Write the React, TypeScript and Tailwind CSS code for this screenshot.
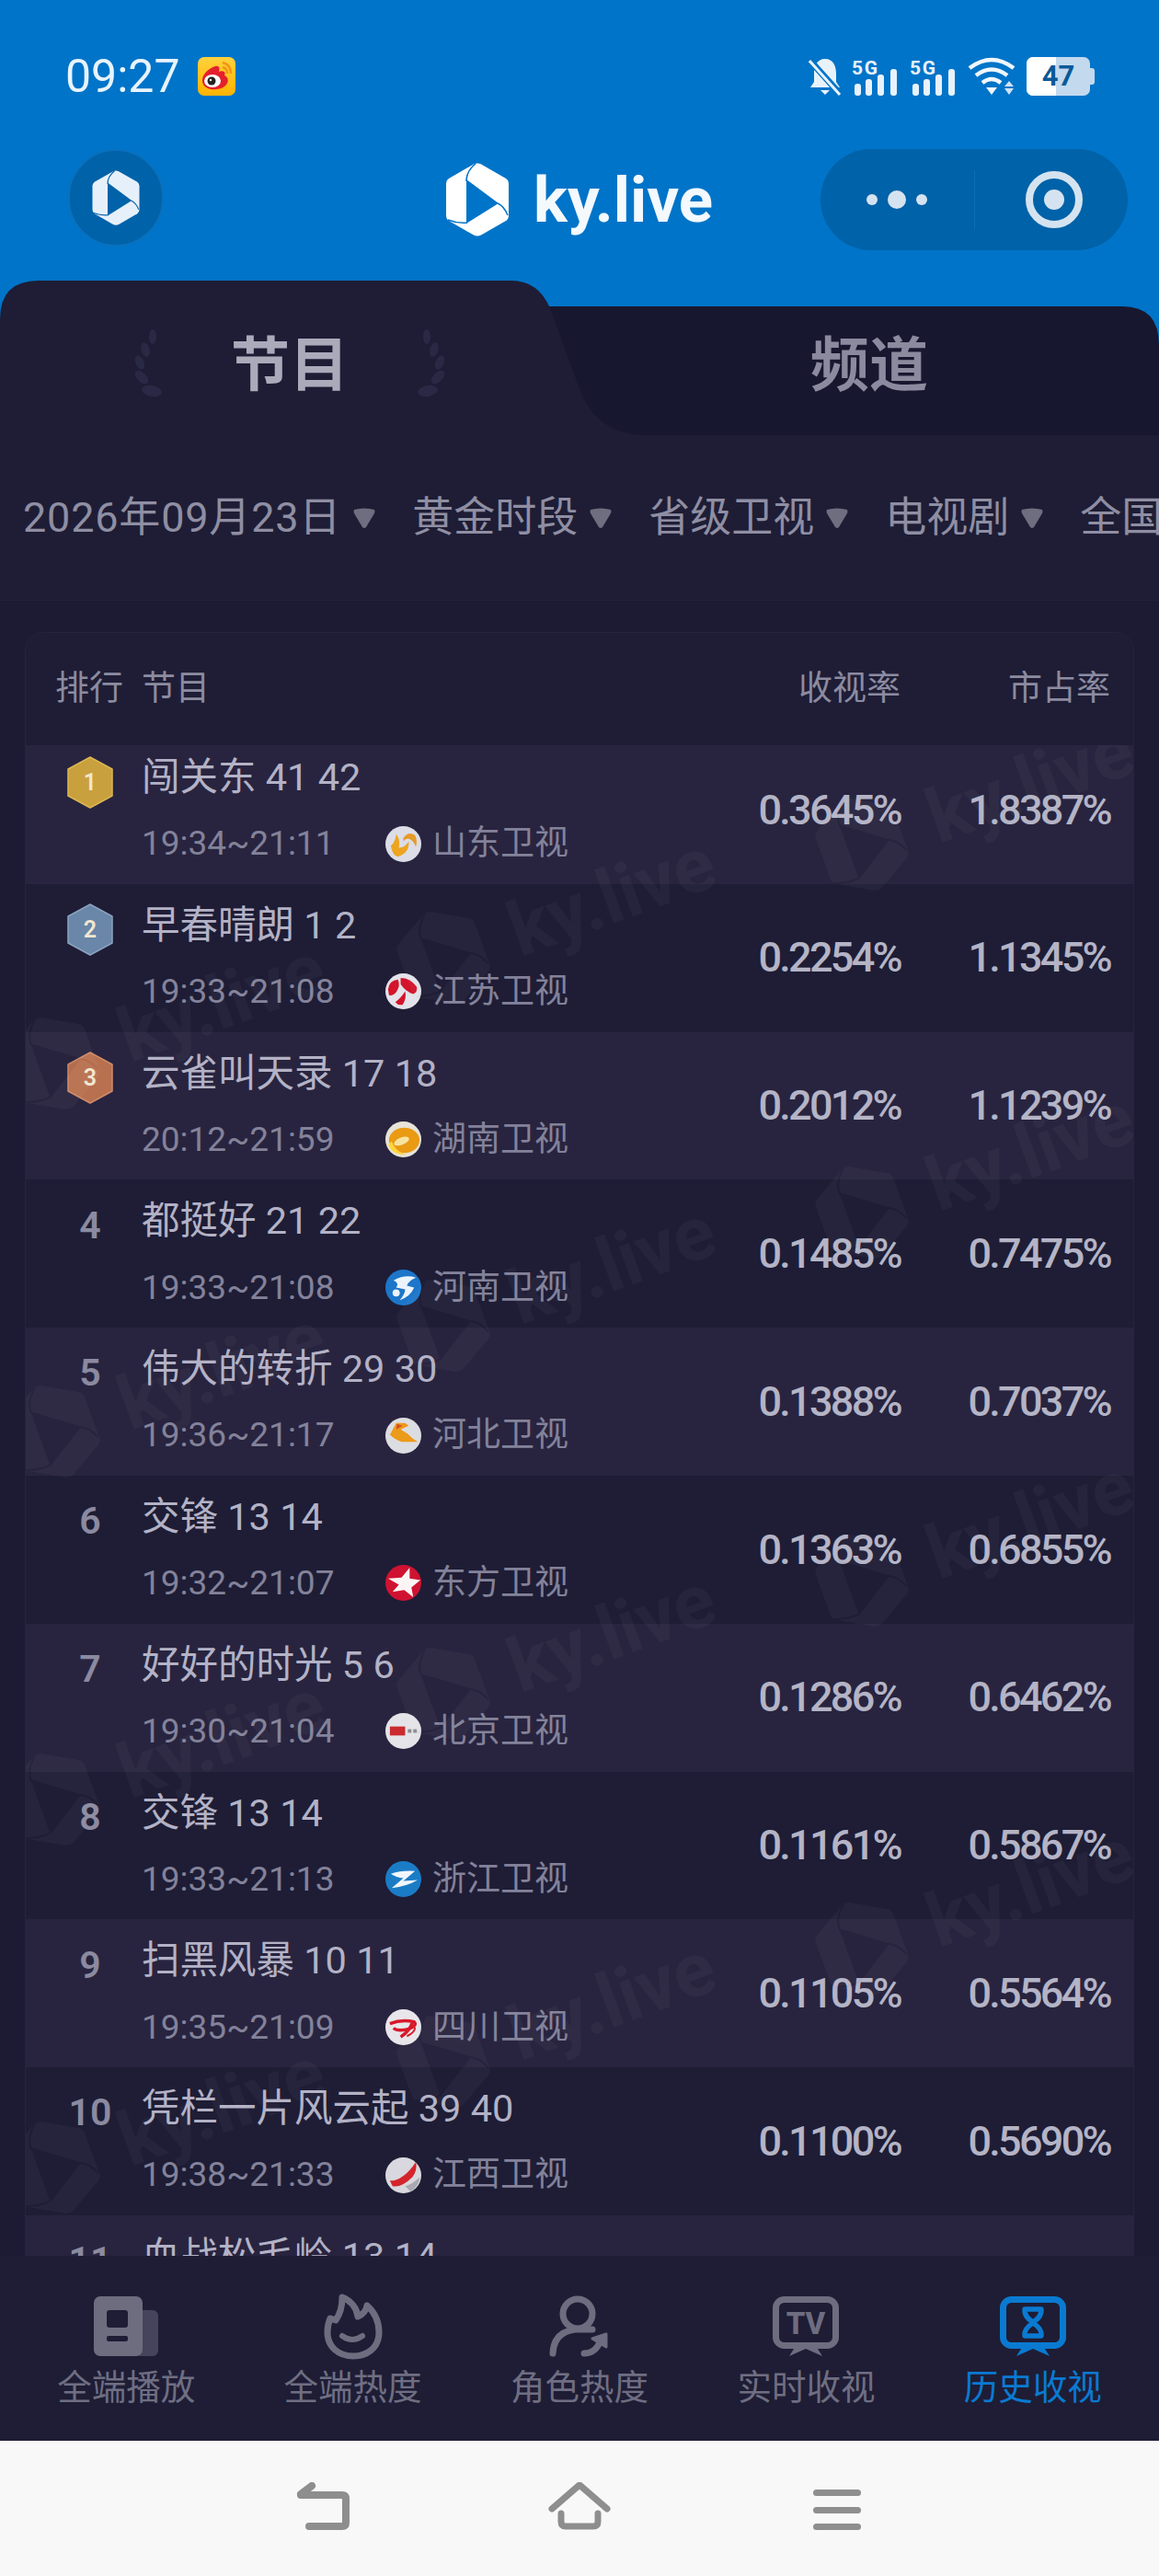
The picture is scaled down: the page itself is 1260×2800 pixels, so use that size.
const rows = [
  { name: "闯关东 41 42", time: "19:34~21:11", channel: "山东卫视", logo: "shandong", rate: "0.3645%", share: "1.8387%" },
  { name: "早春晴朗 1 2", time: "19:33~21:08", channel: "江苏卫视", logo: "jiangsu", rate: "0.2254%", share: "1.1345%" },
  { name: "云雀叫天录 17 18", time: "20:12~21:59", channel: "湖南卫视", logo: "hunan", rate: "0.2012%", share: "1.1239%" },
  { name: "都挺好 21 22", time: "19:33~21:08", channel: "河南卫视", logo: "henan", rate: "0.1485%", share: "0.7475%" },
  { name: "伟大的转折 29 30", time: "19:36~21:17", channel: "河北卫视", logo: "hebei", rate: "0.1388%", share: "0.7037%" },
  { name: "交锋 13 14", time: "19:32~21:07", channel: "东方卫视", logo: "dongfang", rate: "0.1363%", share: "0.6855%" },
  { name: "好好的时光 5 6", time: "19:30~21:04", channel: "北京卫视", logo: "beijing", rate: "0.1286%", share: "0.6462%" },
  { name: "交锋 13 14", time: "19:33~21:13", channel: "浙江卫视", logo: "zhejiang", rate: "0.1161%", share: "0.5867%" },
  { name: "扫黑风暴 10 11", time: "19:35~21:09", channel: "四川卫视", logo: "sichuan", rate: "0.1105%", share: "0.5564%" },
  { name: "凭栏一片风云起 39 40", time: "19:38~21:33", channel: "江西卫视", logo: "jiangxi", rate: "0.1100%", share: "0.5690%" },
  // only the top of this row shows above the bottom nav
  { name: "血战松毛岭 13 14", time: "", channel: "", logo: "", rate: "", share: "" },
];

const filters = ["2026年09月23日", "黄金时段", "省级卫视", "电视剧"];

// logo centre positions on the page, repeated every 400px going down
const watermarkColumns = [
  { x: 937, y: 907 },
  { x: 482, y: 1030 },
  { x: 58, y: 1145 },
];

function KyLogo({ fill, cut, className }: { fill: string; cut: string; className: string }) {
  return (
    <svg viewBox="0 0 68 80" className={className}>
      <path
        d="M30 1.5 Q34 -0.5 38 1.5 L65 17 Q68 19 68 23 L68 57 Q68 61 65 63 L38 78.5 Q34 80.5 30 78.5 L3 63 Q0 61 0 57 L0 23 Q0 19 3 17 Z"
        fill={fill}
      />
      <path d="M22 18 L57 44 L22 66 Z" fill={cut} />
      <path d="M22 20 Q22 9 32 1" stroke={cut} strokeWidth="1.5" fill="none" />
      <path d="M56 44 Q63 47 67 57" stroke={cut} strokeWidth="1.5" fill="none" />
      <path d="M23 65 Q12 66 2 62" stroke={cut} strokeWidth="1.5" fill="none" />
    </svg>
  );
}

function StatusIcons() {
  return (
    <div className="flex items-center">
      <svg viewBox="0 0 36 42" className="h-[42px] w-[36px]">
        <path d="M18 2 C27 2 30 10 30 18 L30 27 L34 33 L2 33 L6 27 L6 18 C6 10 9 2 18 2 Z" fill="#e8f2fb" />
        <path d="M13 36 H23 L18 41 Z" fill="#e8f2fb" />
        <path d="M1 3 L35 41" stroke="#0074c8" strokeWidth="7" />
        <path d="M1 4 L34 41" stroke="#e8f2fb" strokeWidth="3" />
      </svg>
      <SignalIcon className="ml-[11px] h-[42px] w-[50px]" />
      <SignalIcon className="ml-[13px] h-[42px] w-[50px]" />
      <svg viewBox="0 0 52 42" className="ml-[13px] h-[42px] w-[52px]">
        <path d="M2 12 Q26 -6 50 12" stroke="#f0f6fc" strokeWidth="4.5" fill="none" />
        <path d="M9 20 Q26 7 43 20" stroke="#f0f6fc" strokeWidth="4.5" fill="none" />
        <path d="M16 28 Q26 20 36 28" stroke="#f0f6fc" strokeWidth="4.5" fill="none" />
        <path d="M20 33 H32 L26 41 Z" fill="#f0f6fc" />
        <path d="M45 26 L50 32 H40 Z M40 34 H50 L45 41 Z" fill="#cfe2f3" />
      </svg>
      <div className="ml-[12px] flex h-[42px] w-[74px] items-center">
        <div className="relative flex h-full w-[69px] overflow-hidden rounded-[7px] bg-[#c3d9ee]">
          <div className="h-full w-[32px] bg-white" />
          <span className="absolute inset-0 flex items-center justify-center text-[31px] font-bold text-[#0a5a99]">47</span>
        </div>
        <div className="h-[18px] w-[5px] rounded-r-[3px] bg-[#c3d9ee]" />
      </div>
    </div>
  );
}

function SignalIcon({ className }: { className: string }) {
  return (
    <svg viewBox="0 0 50 42" className={className}>
      <text x="0" y="19" fontSize="21" fontWeight="700" fill="#e8f2fb" fontFamily="Roboto, sans-serif" textLength="28">5G</text>
      <rect x="3" y="29" width="7" height="13" rx="3" fill="#e8f2fb" />
      <rect x="15" y="24" width="7" height="18" rx="3" fill="#e8f2fb" />
      <rect x="28" y="19" width="7" height="23" rx="3" fill="#e8f2fb" />
      <rect x="42" y="13" width="7" height="29" rx="3" fill="#e8f2fb" />
    </svg>
  );
}

function WeiboIcon() {
  return (
    <svg viewBox="0 0 41 42" className="ml-[19px] h-[42px] w-[41px]">
      <defs>
        <linearGradient id="weibo-bg" x1="0" y1="0" x2="0" y2="1">
          <stop offset="0" stopColor="#ffd23d" />
          <stop offset="1" stopColor="#ffb300" />
        </linearGradient>
      </defs>
      <rect width="41" height="42" rx="7" fill="url(#weibo-bg)" />
      <path d="M5 27 C4 19 12 12 19 10 C24 9 24 13 23 16 C28 14 31 17 29 20 C34 22 34 28 29 32 C22 37 7 37 5 27 Z" fill="#e4202c" />
      <ellipse cx="16" cy="26" rx="9" ry="7" fill="#fff" />
      <circle cx="15" cy="26" r="4.5" fill="#222" />
      <circle cx="14" cy="25" r="1.2" fill="#fff" />
      <path d="M27 6 Q36 8 36 18" stroke="#f39318" strokeWidth="2.5" fill="none" />
      <path d="M27 11 Q32 12 32 18" stroke="#f39318" strokeWidth="2.5" fill="none" />
    </svg>
  );
}

function Capsule() {
  return (
    <div className="flex h-[110px] w-[334px] items-center rounded-full bg-[#0062a8]">
      <svg viewBox="0 0 74 20" className="ml-[46px] h-[20px] w-[74px]">
        <circle cx="10" cy="10" r="6" fill="#d5e3f0" />
        <circle cx="37" cy="10" r="10" fill="#d5e3f0" />
        <circle cx="64" cy="10" r="6" fill="#d5e3f0" />
      </svg>
      <div className="ml-[47px] h-[64px] w-px bg-[#0b6fb6]" />
      <svg viewBox="0 0 62 62" className="ml-[55px] h-[62px] w-[62px]">
        <circle cx="31" cy="31" r="27" stroke="#d5e3f0" strokeWidth="8" fill="none" />
        <circle cx="31" cy="31" r="11" fill="#d5e3f0" />
      </svg>
    </div>
  );
}

function Laurel({ className }: { className: string }) {
  return (
    <svg viewBox="0 0 36 74" className={className}>
      <ellipse cx="23" cy="8" rx="4" ry="8" fill="#2a2945" />
      <ellipse cx="15" cy="22" rx="4.5" ry="8" fill="#2a2945" transform="rotate(-15 15 22)" />
      <ellipse cx="9" cy="36" rx="4.5" ry="8" fill="#2a2945" transform="rotate(-25 9 36)" />
      <ellipse cx="11" cy="52" rx="5" ry="9" fill="#2a2945" transform="rotate(-45 11 52)" />
      <ellipse cx="22" cy="67" rx="11" ry="6" fill="#2a2945" transform="rotate(10 22 67)" />
    </svg>
  );
}

function Tabs() {
  return (
    <div className="relative flex h-[168px] bg-[#0074c8]">
      <svg viewBox="0 0 1260 168" className="absolute inset-0 h-[168px] w-[1260px]">
        <path d="M560 28 H1220 Q1260 28 1260 70 V168 H560 Z" fill="#181730" />
        <path
          d="M0 168 V42 Q0 0 42 0 H556 Q585 0 598 30 L628 112 Q645 166 700 168 Z"
          fill="#1e1d35"
        />
      </svg>
      <div className="relative flex w-[630px] items-center justify-center gap-[72px] pt-[18px]">
        <Laurel className="-mt-[6px] h-[74px] w-[36px]" />
        <span className="text-[64px] leading-none font-bold text-[#aaaabb]">节目</span>
        <Laurel className="-mt-[6px] h-[74px] w-[36px] -scale-x-100" />
      </div>
      <div className="relative flex w-[630px] items-center justify-center pt-[18px]">
        <span className="text-[64px] leading-none font-bold text-[#8b8a9e]">频道</span>
      </div>
    </div>
  );
}

function Filters() {
  return (
    <div className="flex h-[180px] items-center overflow-hidden border-b border-[#21203a] bg-[#1e1d35] pl-[25px] text-[45px] leading-none whitespace-nowrap text-[#8f8ea3]">
      {filters.map((f, i) => (
        <div key={f} className="mr-[39px] flex shrink-0 items-center">
          <span className={i === 0 ? "tracking-[0.8px]" : ""}>{f}</span>
          <svg viewBox="0 0 26 26" className="ml-[12px] h-[26px] w-[26px]">
            <path d="M2 4 Q13 1 24 4 Q25 6 24 8 L15 23 Q13 25 11 23 L2 8 Q1 6 2 4 Z" fill="#6f6e80" />
          </svg>
        </div>
      ))}
      <span className="shrink-0">全国</span>
    </div>
  );
}

function Medal({ rank }: { rank: number }) {
  const colors = ["#c9a03e", "#6a86a8", "#b8704f"];
  const edges = ["#dcb652", "#8ba3c0", "#d08a68"];
  return (
    <svg viewBox="0 0 50 57" className="h-[57px] w-[50px]">
      <path d="M25 1 L49 14 V43 L25 56 L1 43 V14 Z" fill={colors[rank - 1]} stroke={edges[rank - 1]} strokeWidth="1.5" strokeLinejoin="round" />
      <text x="25" y="37" textAnchor="middle" fontSize="25" fill="#f1e6cf" fontFamily="Roboto, sans-serif">{rank}</text>
    </svg>
  );
}

function ChannelLogo({ id }: { id: string }) {
  const bg: Record<string, string> = {
    shandong: "#dcdde6",
    jiangsu: "#e4e2ea",
    hunan: "#e6e3d8",
    henan: "#1d76c9",
    hebei: "#dcdde2",
    dongfang: "#cf1231",
    beijing: "#e4e4e8",
    zhejiang: "#1b7cc6",
    sichuan: "#e8e6ea",
    jiangxi: "#d8d8de",
  };
  return (
    <svg viewBox="0 0 40 40" className="h-[39px] w-[39px] shrink-0">
      <circle cx="20" cy="20" r="20" fill={bg[id]} />
      {id === "shandong" && (
        <g>
          <path d="M6 22 Q11 18 12 9 Q17 15 15 24 Q22 24 26 17 Q27 30 14 34 Q8 33 6 22 Z" fill="#eda51f" />
          <path d="M20 13 Q26 5 33 10 Q36 16 34 23 Q31 15 26 14 Q23 13 20 17 Z" fill="#e59a2a" />
        </g>
      )}
      {id === "jiangsu" && (
        <g fill="#d3142a">
          <path d="M3 18 Q4 8 14 7 Q17 14 12 21 Q8 26 4 24 Z" />
          <path d="M17 5 Q28 5 35 15 Q36 21 31 23 Q22 20 17 12 Z" />
          <path d="M22 20 Q24 28 19 35 Q14 36 11 32 Q17 28 22 20 Z" />
        </g>
      )}
      {id === "hunan" && (
        <g>
          <ellipse cx="21" cy="21" rx="17" ry="14" fill="#ea9a13" />
          <ellipse cx="18" cy="22" rx="9" ry="4" fill="#f7e3a0" transform="rotate(-22 18 22)" />
          <path d="M3 26 Q8 38 22 37 Q10 32 7 22 Z" fill="#ffd63d" />
        </g>
      )}
      {id === "henan" && (
        <g>
          <path d="M9 12 Q22 5 34 9 Q26 12 24 18 L32 20 Q28 30 16 34 Q22 27 22 22 L12 20 Q16 15 9 12 Z" fill="#ecf3fb" />
          <circle cx="12" cy="26" r="4" fill="#ecf3fb" />
        </g>
      )}
      {id === "hebei" && (
        <g>
          <path d="M12 6 H22 L26 9 L17 13 L25 18 Q29 23 36 27 H18 Q10 24 5 19 Z" fill="#ec9a1a" />
          <path d="M13 7 L19 9 L12 13 Z" fill="#d64a24" />
        </g>
      )}
      {id === "dongfang" && <path d="M3 15 L18 14 L27 3 L27 15 L39 17 L29 25 L31 36 L21 28 L8 30 L15 22 Z" fill="#fbf4f4" />}
      {id === "beijing" && (
        <g>
          <rect x="5" y="15" width="17" height="10" fill="#cb2a2f" />
          <rect x="25" y="18" width="4" height="4" fill="#8c8c96" />
          <rect x="31" y="18" width="4" height="4" fill="#8c8c96" />
        </g>
      )}
      {id === "zhejiang" && (
        <path d="M6 14 Q18 10 33 11 L20 22 L36 21 Q24 28 7 30 L20 19 Q12 18 6 14 Z" fill="#f1f6fb" />
      )}
      {id === "sichuan" && (
        <g fill="none" stroke="#d8182a">
          <path d="M5 16 Q18 11 32 14 Q36 18 26 22 Q14 25 9 21" strokeWidth="3.5" />
          <path d="M30 15 Q27 24 17 31" strokeWidth="3.5" />
          <path d="M33 20 Q33 26 24 30" strokeWidth="2" />
        </g>
      )}
      {id === "jiangxi" && (
        <g>
          <path d="M5 26 Q20 26 34 5 Q36 14 30 22 Q18 34 8 32 Z" fill="#d4242c" />
          <path d="M22 32 Q30 30 38 22 Q38 32 28 38 Z" fill="#a9a9b2" />
        </g>
      )}
    </svg>
  );
}

function Row({ index, row }: { index: number; row: (typeof rows)[number] }) {
  const rank = index + 1;
  return (
    <div className={`flex h-[160.8px] shrink-0 ${index % 2 === 0 ? "bg-[#28243f]" : "bg-[#1e1d35]"}`}>
      <div className="ml-[20px] mr-[6px] flex h-[100px] w-[100px] shrink-0 items-center justify-center text-[41px] font-semibold text-[#8b8aa0]">
        {rank <= 3 ? <Medal rank={rank} /> : <span>{rank}</span>}
      </div>
      <div className="flex-1 pt-[21px]">
        <div className="text-[41.5px] leading-[48px] text-[#b3b2c6]">{row.name}</div>
        {row.logo ? (
          <div className="mt-[24px] flex h-[48px] items-center text-[37px] text-[#83829a]">
            <span className="w-[265px]">{row.time}</span>
            <ChannelLogo id={row.logo} />
            <span className="ml-[12px]">{row.channel}</span>
          </div>
        ) : null}
      </div>
      <div className="flex w-[200px] items-center justify-end text-[45px] font-medium tracking-[-2.7px] text-[#b4b4c6]">{row.rate}</div>
      <div className="flex w-[228px] items-center justify-end text-[45px] font-medium tracking-[-2.7px] text-[#b4b4c6]">{row.share}</div>
      <div className="w-[25px] shrink-0" />
    </div>
  );
}

function Watermarks() {
  const marks = watermarkColumns.flatMap((col) =>
    [0, 1, 2, 3].map((k) => ({ x: col.x, y: col.y + k * 400 })),
  );
  return (
    <>
      {marks.map((m) => (
        <div
          key={`${m.x}-${m.y}`}
          className="pointer-events-none absolute flex origin-[45px_53px] rotate-[-20deg] items-center gap-[34px] whitespace-nowrap opacity-[0.03]"
          style={{ left: m.x - 45 - 28, top: m.y - 43 - 687 }}
        >
          <KyLogo fill="#ffffff" cut="#1e1d35" className="h-[106px] w-[90px]" />
          <span className="text-[82px] leading-none font-bold text-white">ky.live</span>
        </div>
      ))}
    </>
  );
}

function Table() {
  return (
    <div className="min-h-0 flex-1 overflow-hidden bg-[#1c1b33] px-[27px] pt-[34px]">
      <div className="relative h-[1800px] overflow-hidden rounded-t-[20px] border border-[#25243c] bg-[#1e1d35]">
        <div className="relative z-10 flex h-[122px] items-center bg-[#1e1d35] pl-[32px] text-[37px] text-[#8c8ba0]">
          <span className="w-[94px]">排行</span>
          <span className="flex-1">节目</span>
          <span className="w-[200px] text-right">收视率</span>
          <span className="w-[228px] text-right">市占率</span>
          <span className="w-[25px]" />
        </div>
        <div className="-mt-[10px] flex flex-col">
          {rows.map((r, i) => (
            <Row key={i} index={i} row={r} />
          ))}
        </div>
        <Watermarks />
      </div>
    </div>
  );
}

function NewsIcon() {
  return (
    <svg viewBox="0 0 70 66" className="h-[66px] w-[70px]">
      <rect x="45" y="15" width="25" height="50" rx="6" fill="#45445c" />
      <rect x="0" y="0" width="53" height="65" rx="7" fill="#6e6d80" />
      <rect x="14" y="15" width="23" height="19" rx="3" fill="#1e1d35" />
      <rect x="14" y="43" width="23" height="6" rx="2" fill="#1e1d35" />
    </svg>
  );
}

function FlameIcon() {
  return (
    <svg viewBox="0 0 64 72" className="h-[72px] w-[64px]" fill="none" stroke="#6e6d80" strokeWidth="7" strokeLinecap="round" strokeLinejoin="round">
      <path d="M7 27 L13 29 C18 22 20 12 20 4 C30 8 36 16 37 25 C42 23 46 19 47 13 C56 21 60 32 60 42 C60 60 46 68 32 68 C16 68 4 58 4 42 Q4 34 7 27 Z" />
      <path d="M20 46 Q31 54 42 46" strokeWidth="6" />
    </svg>
  );
}

function PersonIcon() {
  return (
    <svg viewBox="0 0 66 68" className="h-[68px] w-[66px]" fill="none" stroke="#6e6d80" strokeWidth="7" strokeLinecap="round">
      <circle cx="31" cy="20" r="16" />
      <path d="M4 63 Q5 40 28 37 L47 37" />
      <path d="M38 63 Q50 63 55 51" />
      <path d="M47 47 L62 42 L62 56 Z" fill="#6e6d80" strokeWidth="3" strokeLinejoin="round" />
    </svg>
  );
}

function ScreenIcon({ color, children }: { color: string; children: React.ReactNode }) {
  return (
    <svg viewBox="0 0 72 66" className="h-[66px] w-[72px]" fill="none">
      <rect x="3.5" y="3.5" width="65" height="50" rx="9" stroke={color} strokeWidth="7" />
      <path d="M18 65 L25 54 H47 L54 65 L36 57 Z" fill={color} />
      {children}
    </svg>
  );
}

const navItems = [
  { label: "全端播放", icon: <NewsIcon /> },
  { label: "全端热度", icon: <FlameIcon /> },
  { label: "角色热度", icon: <PersonIcon /> },
  {
    label: "实时收视",
    icon: (
      <ScreenIcon color="#6e6d80">
        <text x="36" y="41" textAnchor="middle" fontSize="33" fontWeight="800" fill="#6e6d80" fontFamily="Roboto, sans-serif">TV</text>
      </ScreenIcon>
    ),
  },
  {
    label: "历史收视",
    active: true,
    icon: (
      <ScreenIcon color="#0a7ad1">
        <path d="M27 14 H45 Q46 22 36 28 Q26 22 27 14 Z" stroke="#0a7ad1" strokeWidth="5.5" strokeLinejoin="round" />
        <path d="M27 43 H45 Q46 35 36 29 Q26 35 27 43 Z" stroke="#0a7ad1" strokeWidth="5.5" strokeLinejoin="round" />
      </ScreenIcon>
    ),
  },
];

function BottomNav() {
  return (
    <div className="relative z-20 grid h-[201px] shrink-0 grid-cols-5 bg-[#1e1d35] px-[14px] pt-[41px]">
      {navItems.map((item) => (
        <div key={item.label} className="flex flex-col items-center">
          <div className="flex h-[72px] items-center justify-center">{item.icon}</div>
          <span className={`mt-[6px] text-[37.5px] leading-[48px] ${item.active ? "text-[#0a7ad1]" : "text-[#6f6e82]"}`}>{item.label}</span>
        </div>
      ))}
    </div>
  );
}

function SystemNav() {
  return (
    <div className="relative flex h-[147px] shrink-0 bg-[#f8f8f8] pt-[45px] pl-[322px]">
      <svg viewBox="0 0 58 52" className="h-[52px] w-[58px]" fill="none" stroke="#8e8e8e" strokeWidth="8" strokeLinecap="round" strokeLinejoin="round">
        <path d="M14 48 H50 Q54 48 54 44 V18 Q54 14 50 14 H5" />
        <path d="M5 13 L17 4" />
      </svg>
      <svg viewBox="0 0 68 52" className="ml-[216px] h-[52px] w-[68px]" fill="none" stroke="#8e8e8e" strokeWidth="7" strokeLinecap="round" strokeLinejoin="round">
        <path d="M4 29 L34 3 L64 29" />
        <path d="M14 34 V43 Q14 48 19 48 H49 Q54 48 54 43 V34" />
      </svg>
      <div className="ml-[220px] flex h-[52px] w-[52px] flex-col justify-between pt-[8px]">
        <div className="h-[7px] rounded-full bg-[#8e8e8e]" />
        <div className="h-[7px] rounded-full bg-[#8e8e8e]" />
        <div className="h-[7px] rounded-full bg-[#8e8e8e]" />
      </div>
    </div>
  );
}

export default function App() {
  return (
    <div className="flex h-[2800px] w-[1260px] flex-col overflow-hidden bg-[#0074c8] font-['Roboto','Noto_Sans_CJK_SC',sans-serif]">
      {/* status bar */}
      <div className="flex h-[162px] shrink-0 items-start justify-between pl-[71px] pr-[70px] pt-[62px]">
        <div className="flex items-center">
          <span className="text-[50px] leading-[42px] text-[#e8f4fd]">09:27</span>
          <WeiboIcon />
        </div>
        <StatusIcons />
      </div>
      {/* mini program header */}
      <div className="grid h-[143px] shrink-0 grid-cols-[1fr_auto_1fr] items-start">
        <div className="pl-[74px]">
          <div className="flex h-[106px] w-[104px] items-center justify-center rounded-full border-2 border-[#0a70bd] bg-[#0062a8]">
            <KyLogo fill="#e6f0fa" cut="#0062a8" className="h-[60px] w-[52px]" />
          </div>
        </div>
        <div className="flex h-[110px] items-center gap-[27px]">
          <KyLogo fill="#ffffff" cut="#0074c8" className="h-[80px] w-[68px]" />
          <span className="text-[69px] leading-none font-bold text-[#f4f9fe]">ky.live</span>
        </div>
        <div className="flex justify-end pr-[34px]">
          <Capsule />
        </div>
      </div>
      <Tabs />
      <Filters />
      <Table />
      <BottomNav />
      <SystemNav />
    </div>
  );
}
